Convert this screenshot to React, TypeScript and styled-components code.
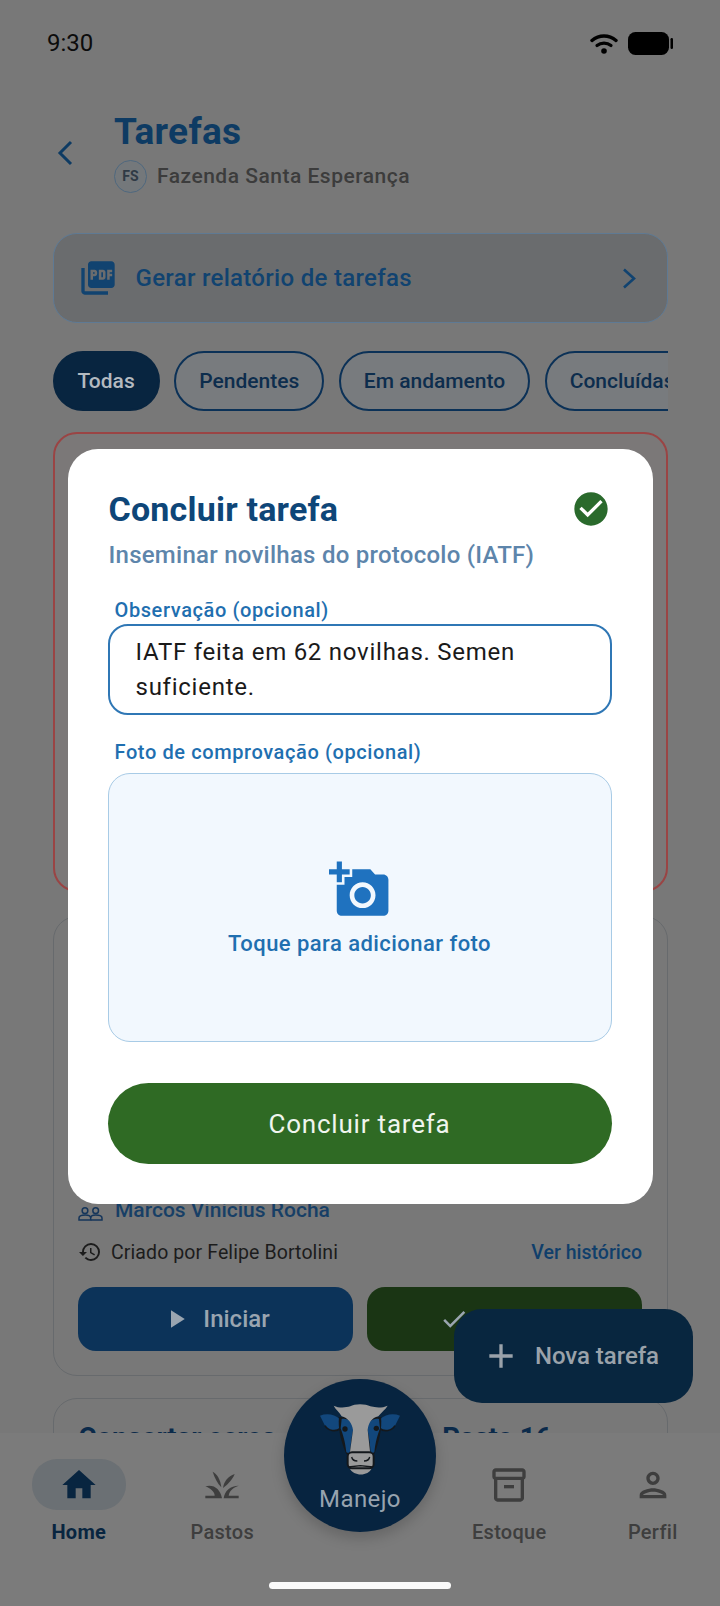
import styled, { createGlobalStyle } from 'styled-components';
import {
  MdAdd,
  MdAddAPhoto,
  MdCheck,
  MdCheckCircle,
  MdHistory,
  MdHome,
  MdOutlineInventory2,
  MdOutlinePerson,
  MdPictureAsPdf,
  MdPlayArrow,
} from 'react-icons/md';

const GlobalStyle = createGlobalStyle`
  html, body {
    margin: 0;
    padding: 0;
    background: #787878;
  }
  * {
    box-sizing: border-box;
  }
`;

const Page = styled.div`
  position: relative;
  display: flex;
  flex-direction: column;
  width: 720px;
  height: 1606px;
  overflow: hidden;
  background: #787878;
  font-family: Roboto, "Liberation Sans", sans-serif;
`;

const StatusBar = styled.div`
  display: flex;
  align-items: center;
  justify-content: space-between;
  flex-shrink: 0;
  height: 86px;
  padding: 0 47px;
  color: #000;
`;

const Clock = styled.span`
  font-size: 24px;
  line-height: 1;
  color: #0c0c0c;
`;

const StatusIcons = styled.div`
  display: flex;
  align-items: center;
  gap: 10px;
`;

const Header = styled.header`
  display: flex;
  align-items: center;
  flex-shrink: 0;
  height: 80px;
  margin-top: 27px;
  padding-left: 57px;
  color: #0e3b63;
`;

const BackSlot = styled.div`
  display: flex;
  width: 57px;
`;

const TitleBlock = styled.div`
  display: flex;
  flex-direction: column;
  gap: 10px;
`;

const Title = styled.h1`
  margin: 0;
  font-size: 37px;
  line-height: 36px;
  font-weight: 700;
  letter-spacing: 0.3px;
  color: #0e3b63;
`;

const FarmRow = styled.div`
  display: flex;
  align-items: center;
  gap: 10px;
`;

const FarmBadge = styled.div`
  display: flex;
  align-items: center;
  justify-content: center;
  width: 33px;
  height: 33px;
  border: 1.5px solid #4f687f;
  border-radius: 50%;
  background: #74787b;
  font-size: 14px;
  font-weight: 700;
  color: #2f3a45;
`;

const FarmName = styled.span`
  font-size: 21px;
  font-weight: 500;
  letter-spacing: 0.5px;
  color: #3c3c3c;
`;

const Body = styled.main`
  display: flex;
  flex-direction: column;
  flex: 1;
  min-height: 0;
  overflow: hidden;
  padding: 40px 52.5px 0;
`;

const ReportCard = styled.div`
  display: flex;
  align-items: center;
  flex-shrink: 0;
  height: 90px;
  padding: 0 31px 0 24px;
  border: 1.5px solid #5f7a94;
  border-radius: 24px;
  background: #6a6c6e;
  color: #114370;
`;

const ReportLabel = styled.span`
  flex: 1;
  margin-left: 18px;
  font-size: 24px;
  font-weight: 500;
  letter-spacing: 0.3px;
  color: #114370;
`;

const Chips = styled.div`
  display: flex;
  flex-shrink: 0;
  gap: 14.5px;
  height: 60px;
  margin-top: 28px;
  overflow: hidden;
`;

const Chip = styled.div<{ $active?: boolean }>`
  display: flex;
  align-items: center;
  flex-shrink: 0;
  height: 60px;
  padding: 0 23px;
  border: 2px solid ${(p) => (p.$active ? '#082540' : '#0b3157')};
  border-radius: 30px;
  background: ${(p) => (p.$active ? '#082540' : '#787b7e')};
  font-size: 21px;
  font-weight: 500;
  color: ${(p) => (p.$active ? '#b4bac0' : '#0d2d4d')};
`;

const AlertCard = styled.section`
  flex-shrink: 0;
  height: 460px;
  margin-top: 21px;
  border: 2px solid #9a4444;
  border-radius: 24px;
  background: #7b7878;
`;

const TaskCard = styled.section`
  display: flex;
  flex-direction: column;
  justify-content: flex-end;
  flex-shrink: 0;
  height: 460px;
  margin-top: 24px;
  padding: 0 24.5px 24px;
  border: 1.5px solid #676a6d;
  border-radius: 24px;
`;

const PeekCard = styled.section`
  flex-shrink: 0;
  height: 120px;
  margin-top: 22px;
  padding: 22px 25px 0;
  border: 1.5px solid #676a6d;
  border-radius: 24px;
`;

const PeekTitle = styled.h2`
  display: flex;
  gap: 166px;
  margin: 0;
  font-size: 27.5px;
  font-weight: 700;
  white-space: nowrap;
  color: #0b2a4a;
`;

const Assignee = styled.div`
  display: flex;
  align-items: center;
  gap: 12px;
  font-size: 21px;
  font-weight: 500;
  color: #173f66;
`;

const MetaRow = styled.div`
  display: flex;
  align-items: center;
  justify-content: space-between;
  margin-top: 18px;
`;

const Creator = styled.div`
  display: flex;
  align-items: center;
  gap: 9px;
  font-size: 19.5px;
  letter-spacing: 0.1px;
  color: #1c1c1c;
`;

const HistoryLink = styled.span`
  font-size: 19.5px;
  font-weight: 500;
  color: #103f6b;
`;

const Actions = styled.div`
  display: grid;
  grid-template-columns: 1fr 1fr;
  gap: 14px;
  margin-top: 23px;
`;

const ActionButton = styled.div<{ $bg: string }>`
  display: flex;
  align-items: center;
  justify-content: center;
  gap: 12px;
  height: 64px;
  border-radius: 18px;
  background: ${(p) => p.$bg};
  font-size: 24px;
  font-weight: 500;
  color: #9aa5b0;
`;

const Fab = styled.div`
  position: absolute;
  left: 454px;
  top: 1309px;
  display: flex;
  align-items: center;
  gap: 14px;
  width: 239px;
  height: 94px;
  padding-left: 27px;
  border-radius: 28px;
  background: #08263f;
  font-size: 24px;
  font-weight: 500;
  letter-spacing: -0.05px;
  color: #9aa2aa;
`;

const BottomNav = styled.nav`
  position: relative;
  display: flex;
  flex-direction: column;
  flex-shrink: 0;
  height: 173px;
  padding: 26px 0 0 7px;
  background: #7b7b7b;
`;

const NavGrid = styled.div`
  display: grid;
  grid-template-columns: repeat(5, 143.5px);
`;

const NavItem = styled.div<{ $active?: boolean }>`
  display: flex;
  flex-direction: column;
  align-items: center;
  font-size: 20px;
  line-height: 24px;
  letter-spacing: 0.3px;
  font-weight: ${(p) => (p.$active ? 700 : 500)};
  color: ${(p) => (p.$active ? '#082540' : '#3e3e3e')};
`;

const NavIconWrap = styled.div<{ $active?: boolean }>`
  display: flex;
  align-items: center;
  justify-content: center;
  width: 94px;
  height: 51px;
  margin-bottom: 10px;
  border-radius: 25px;
  background: ${(p) => (p.$active ? '#6b7074' : 'transparent')};
`;

const HomeIndicator = styled.div`
  align-self: center;
  width: 182px;
  height: 7px;
  margin: 38px 7px 0 0;
  border-radius: 4px;
  background: #fafafa;
`;

const ManejoButton = styled.div`
  position: absolute;
  left: 284px;
  top: 1379px;
  display: flex;
  flex-direction: column;
  align-items: center;
  width: 152px;
  height: 153px;
  padding-top: 16px;
  border-radius: 50%;
  background: #072440;
  box-shadow: 0 6px 14px rgba(0, 0, 0, 0.18);
  font-size: 24px;
  line-height: 28px;
  letter-spacing: 0.4px;
  color: #97a3af;
`;

const Scrim = styled.div`
  position: absolute;
  inset: 0;
  display: flex;
  justify-content: center;
  padding-top: 449px;
`;

const Modal = styled.div`
  width: 585px;
  height: 755px;
  padding: 36px 40px 0;
  border-radius: 30px;
  background: #fff;
`;

const ModalHead = styled.div`
  display: flex;
  align-items: center;
  justify-content: space-between;
  height: 48px;
  padding: 0 2px 0 1px;
  color: #2a6a2c;
`;

const ModalTitle = styled.h2`
  margin: 0;
  font-size: 34px;
  font-weight: 700;
  letter-spacing: 0.2px;
  color: #0e4678;
`;

const ModalSubtitle = styled.p`
  margin: 8px 0 0 1px;
  font-size: 24px;
  line-height: 28px;
  font-weight: 500;
  letter-spacing: 0.25px;
  color: #5d85ab;
`;

const FieldLabel = styled.div<{ $first?: boolean }>`
  margin: ${(p) => (p.$first ? '29px' : '0')} 0 0 7px;
  font-size: 20px;
  line-height: 24px;
  font-weight: 500;
  letter-spacing: 0.6px;
  color: #1f6fb0;
`;

const NoteBox = styled.div`
  width: 504px;
  height: 91px;
  margin: 2px 0 25px;
  padding: 9px 26px 0;
  border: 2px solid #2f77b5;
  border-radius: 20px;
  font-size: 24px;
  line-height: 35px;
  letter-spacing: 0.75px;
  color: #1a1a1a;
`;

const PhotoBox = styled.div`
  display: flex;
  flex-direction: column;
  align-items: center;
  justify-content: center;
  width: 504px;
  height: 269px;
  margin-top: 9px;
  border: 1.5px solid #a8cbe6;
  border-radius: 22px;
  background: #f2f8fe;
  color: #1f72bf;
`;

const PhotoHint = styled.span`
  margin-top: 10px;
  font-size: 22px;
  letter-spacing: 0.45px;
  font-weight: 500;
  color: #1f6fb0;
`;

const SubmitButton = styled.div`
  display: flex;
  align-items: center;
  justify-content: center;
  width: 504px;
  height: 81px;
  margin-top: 41px;
  border-radius: 41px;
  background: #2f6a24;
  font-size: 26px;
  letter-spacing: 0.8px;
  color: #f0f5ee;
`;

const WifiIcon = () => (
  <svg width="28" height="21" viewBox="0 0 28 21" fill="none">
    <path d="M2 7.5C9 1.5 19 1.5 26 7.5" stroke="#000" strokeWidth="3.4" strokeLinecap="round" />
    <path d="M7 12.5C11 9.2 17 9.2 21 12.5" stroke="#000" strokeWidth="3.2" strokeLinecap="round" />
    <circle cx="14" cy="18" r="2.8" fill="#000" />
  </svg>
);

const BatteryIcon = () => (
  <svg width="45" height="23" viewBox="0 0 45 23">
    <rect x="0" y="0" width="41" height="23" rx="7.5" fill="#000" />
    <rect x="42.5" y="6" width="2.5" height="11" rx="1.2" fill="#000" />
  </svg>
);

const BackIcon = () => (
  <svg width="16" height="26" viewBox="0 0 16 26" fill="none">
    <path d="M14 2 L3 13 L14 24" stroke="currentColor" strokeWidth="3" />
  </svg>
);

const ForwardIcon = () => (
  <svg width="14" height="21" viewBox="0 0 14 21" fill="none">
    <path d="M2 1.5 L12 10.5 L2 19.5" stroke="currentColor" strokeWidth="2.6" />
  </svg>
);

const PeopleIcon = () => (
  <svg width="25" height="14" viewBox="0 0 75 42" fill="none" stroke="#15355a" strokeWidth="4.5" style={{ marginTop: 8 }}>
    <circle cx="21" cy="11" r="8.5" />
    <circle cx="53" cy="11" r="8.5" />
    <path d="M3 39 V33 C3 27 12 24 22 24 C32 24 38 28 38 33 V39 Z" />
    <path d="M38 33 C38 28 44 24 53 24 C63 24 72 27 72 33 V39 H38" />
  </svg>
);

const GrassIcon = () => (
  <svg width="40" height="32" viewBox="40 40 120 96" fill="#3e3e3e">
    <path d="M50 92 C75 85 95 100 100 128 L50 128 L50 120 L78 120 C78 108 65 98 50 92 Z" />
    <path d="M150 90 C125 90 108 105 105 128 L150 128 L150 120 L120 120 C122 105 135 95 150 90 Z" />
    <path d="M72 48 C85 55 95 70 98 95 C88 85 78 68 72 48 Z" />
    <path d="M138 55 C118 62 105 78 103 97 C115 88 130 75 138 55 Z" />
  </svg>
);

// cabeca de vaca do botao central
const CowIcon = () => (
  <svg width="90" height="90" viewBox="0 0 270 270" style={{ flexShrink: 0 }}>
    <path d="M15 62 C35 54 60 58 74 72 L76 100 C62 112 40 108 30 92 Z" fill="#12477c" />
    <path d="M255 62 C235 54 210 58 196 72 L194 100 C208 112 230 108 240 92 Z" fill="#12477c" />
    <path d="M30 92 C40 108 62 112 76 100" stroke="#14181c" strokeWidth="5" fill="none" />
    <path d="M240 92 C230 108 208 112 194 100" stroke="#14181c" strokeWidth="5" fill="none" />
    <path d="M72 66 C68 100 78 140 94 178 L178 178 C192 140 202 100 198 66 Z" fill="#14181c" />
    <path d="M80 72 C97 68 114 80 116 96 C110 125 106 150 105 176 L94 172 C91 140 84 120 77 100 Z" fill="#12477c" />
    <path d="M192 72 C175 68 158 80 156 96 C162 125 166 150 167 176 L178 172 C181 140 188 120 195 100 Z" fill="#12477c" />
    <circle cx="90" cy="102" r="8" fill="#14181c" />
    <circle cx="184" cy="100" r="8" fill="#14181c" />
    <path
      d="M56 32 C72 40 92 38 106 34 C118 26 152 26 166 34 C182 38 200 40 218 32 C212 44 198 52 190 64 C170 68 160 85 158 105 L166 178 L104 178 L114 105 C112 85 98 68 80 64 C72 50 62 44 56 32 Z"
      fill="#9a9a9a"
    />
    <path d="M104 220 L170 220 C160 245 115 245 104 220 Z" fill="#9a9a9a" />
    <rect x="98" y="172" width="78" height="48" rx="13" fill="#9a9a9a" stroke="#14181c" strokeWidth="6" />
    <path d="M110 186 C112 196 120 198 127 198" stroke="#14181c" strokeWidth="4" fill="none" />
    <path d="M164 186 C162 196 154 198 147 198" stroke="#14181c" strokeWidth="4" fill="none" />
    <path d="M100 216 L136 212 L174 216" stroke="#14181c" strokeWidth="4" fill="none" />
  </svg>
);

export default function App() {
  return (
    <>
      <GlobalStyle />
      <Page>
        <StatusBar>
          <Clock>9:30</Clock>
          <StatusIcons>
            <WifiIcon />
            <BatteryIcon />
          </StatusIcons>
        </StatusBar>

        <Header>
          <BackSlot>
            <BackIcon />
          </BackSlot>
          <TitleBlock>
            <Title>Tarefas</Title>
            <FarmRow>
              <FarmBadge>FS</FarmBadge>
              <FarmName>Fazenda Santa Esperança</FarmName>
            </FarmRow>
          </TitleBlock>
        </Header>

        <Body>
          <ReportCard>
            <MdPictureAsPdf size={40} />
            <ReportLabel>Gerar relatório de tarefas</ReportLabel>
            <ForwardIcon />
          </ReportCard>

          <Chips>
            <Chip $active>Todas</Chip>
            <Chip>Pendentes</Chip>
            <Chip>Em andamento</Chip>
            <Chip>Concluídas</Chip>
          </Chips>

          <AlertCard />

          <TaskCard>
            <Assignee>
              <PeopleIcon />
              Marcos Vinicius Rocha
            </Assignee>
            <MetaRow>
              <Creator>
                <MdHistory size={24} />
                Criado por Felipe Bortolini
              </Creator>
              <HistoryLink>Ver histórico</HistoryLink>
            </MetaRow>
            <Actions>
              <ActionButton $bg="#0c3359">
                <MdPlayArrow size={30} />
                Iniciar
              </ActionButton>
              <ActionButton $bg="#1a3514">
                <MdCheck size={30} />
                Concluir
              </ActionButton>
            </Actions>
          </TaskCard>

          <PeekCard>
            <PeekTitle>
              <span>Consertar cerca</span>
              <span>Pasto 16</span>
            </PeekTitle>
          </PeekCard>
        </Body>

        <BottomNav>
          <NavGrid>
            <NavItem $active>
              <NavIconWrap $active>
                <MdHome size={40} />
              </NavIconWrap>
              Home
            </NavItem>
            <NavItem>
              <NavIconWrap>
                <GrassIcon />
              </NavIconWrap>
              Pastos
            </NavItem>
            <div />
            <NavItem>
              <NavIconWrap>
                <MdOutlineInventory2 size={40} />
              </NavIconWrap>
              Estoque
            </NavItem>
            <NavItem>
              <NavIconWrap>
                <MdOutlinePerson size={40} />
              </NavIconWrap>
              Perfil
            </NavItem>
          </NavGrid>
          <HomeIndicator />
        </BottomNav>

        <ManejoButton>
          <CowIcon />
          <span>Manejo</span>
        </ManejoButton>

        <Fab>
          <MdAdd size={40} />
          Nova tarefa
        </Fab>

        <Scrim>
          <Modal>
            <ModalHead>
              <ModalTitle>Concluir tarefa</ModalTitle>
              <MdCheckCircle size={40} />
            </ModalHead>
            <ModalSubtitle>Inseminar novilhas do protocolo (IATF)</ModalSubtitle>
            <FieldLabel $first>Observação (opcional)</FieldLabel>
            <NoteBox>
              IATF feita em 62 novilhas. Semen
              <br />
              suficiente.
            </NoteBox>
            <FieldLabel>Foto de comprovação (opcional)</FieldLabel>
            <PhotoBox>
              <MdAddAPhoto size={62} />
              <PhotoHint>Toque para adicionar foto</PhotoHint>
            </PhotoBox>
            <SubmitButton>Concluir tarefa</SubmitButton>
          </Modal>
        </Scrim>
      </Page>
    </>
  );
}
